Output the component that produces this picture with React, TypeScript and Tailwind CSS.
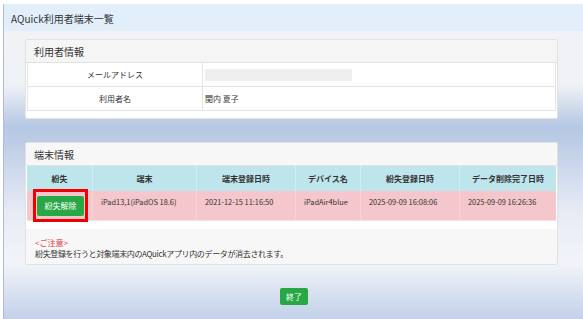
import React from "react";

const font = "font-['Meiryo','Noto_Sans_CJK_JP',sans-serif]";

const userRows = [
    { label: "メールアドレス", value: null },
    { label: "利用者名", value: "関内 夏子" },
];

const cols = ["紛失", "端末", "端末登録日時", "デバイス名", "紛失登録日時", "データ削除完了日時"];
const cells = ["iPad13,1(iPadOS 18.6)", "2021-12-15 11:16:50", "iPadAir4blue", "2025-09-09 16:08:06", "2025-09-09 16:26:36"];

export default function App() {
    return (
        <div className={`h-[319px] w-[583px] overflow-hidden bg-white pt-[4px] pl-[3px] text-[#333] ${font}`}>
            <div className="flex h-full flex-col border-l border-[#a9bddd]">
                {/* Title bar */}
                <div className="flex h-[27px] shrink-0 items-center bg-[#e2effb] pl-[7px] pt-[1px] text-[10px]">
                    AQuick利用者端末一覧
                </div>

                <div className="flex flex-1 flex-col bg-[linear-gradient(to_bottom,#f1f2f6_0px,#eef1f6_55px,#b6c8e4_95px,#bccce6_110px,#e6ebf4_180px,#f2f4f9_232px,#c2d0e9_288px)] pt-[8px]">
                    {/* 利用者情報 */}
                    <div className="ml-[21px] w-[533px] rounded-[2px] border border-[#e2e2e2] bg-white pb-[7px]">
                        <div className="flex h-[23px] items-center border-b border-[#e2e2e2] bg-[#f5f5f5] pl-[8px] text-[10px]">
                            利用者情報
                        </div>
                        <div className="px-[1px]">
                            {userRows.map((row) => (
                                <div key={row.label} className="grid h-[24px] grid-cols-[175px_1fr] border border-t-0 border-[#e4e4e4] text-[8px]">
                                    <div className="flex items-center justify-center border-r border-[#e4e4e4]">{row.label}</div>
                                    <div className="flex items-center pl-[2px]">
                                        {row.value ?? <div className="h-[12px] w-[147px] bg-[#efefef]" />}
                                    </div>
                                </div>
                            ))}
                        </div>
                    </div>

                    {/* 端末情報 */}
                    <div className="mt-[23px] ml-[21px] w-[533px] rounded-[2px] border border-[#e2e2e2] bg-[#f7f7f7]">
                        <div className="flex h-[23px] items-center border-b border-[#e2e2e2] pl-[8px] text-[10px]">
                            端末情報
                        </div>
                        <div className="bg-white px-[1px] pb-[8px]">
                            <div className="grid h-[25px] grid-cols-[65px_104px_99px_65px_99px_97px] bg-[#bee5eb] text-[8px] font-bold">
                                {cols.map((c, i) => (
                                    <div key={c} className={`flex items-center justify-center ${i > 0 ? "border-l border-[#d3edf1]" : ""}`}>
                                        {c}
                                    </div>
                                ))}
                            </div>
                            <div className="grid h-[30px] grid-cols-[65px_104px_99px_65px_99px_97px] border-b border-[#e6e6e6] bg-[#f5c6cb] text-[7.4px]">
                                <div className="relative">
                                    <div className="absolute top-[-2px] bottom-[-2px] left-[6px] flex w-[55px] items-center justify-center border-[3px] border-[#f00000]">
                                        <div className="flex h-[20px] w-[47px] items-center justify-center rounded-[2px] bg-[#28a745] text-[8px] text-white">
                                            紛失解除
                                        </div>
                                    </div>
                                </div>
                                {cells.map((v) => (
                                    <div key={v} className="border-l border-[#efd3d6] pt-[6px] pl-[8px] leading-[10px]">
                                        {v}
                                    </div>
                                ))}
                            </div>
                        </div>
                        <div className="h-[35px] px-[9px] pt-[8px] text-[8px] leading-[11px]">
                            <div className="text-[#e03a3a]">&lt;ご注意&gt;</div>
                            <div className="tracking-[-0.35px]">紛失登録を行うと対象端末内のAQuickアプリ内のデータが消去されます。</div>
                        </div>
                    </div>

                    {/* 終了 */}
                    <div className="mt-[23px] flex justify-center pl-[1px]">
                        <button className="flex h-[17px] w-[28px] items-center justify-center rounded-[2px] bg-[#28a745] text-[8px] text-white">
                            終了
                        </button>
                    </div>
                </div>
            </div>
        </div>
    );
}
